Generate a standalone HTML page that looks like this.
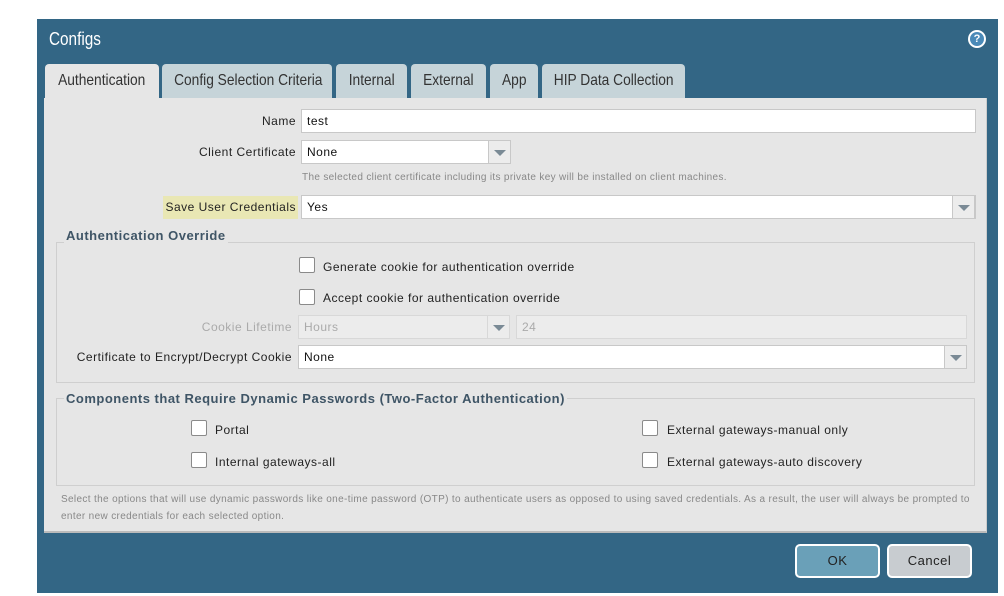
<!DOCTYPE html>
<html><head><meta charset="utf-8"><style>
*{box-sizing:border-box;margin:0;padding:0}
body{width:1004px;height:596px;background:#fff;position:relative;overflow:hidden;font-family:"Liberation Sans",sans-serif;font-size:12px;color:#222}
.a{position:absolute}
.dlg{left:37px;top:19px;width:961px;height:574px;background:#336685}
.title{left:49px;top:29px;color:#fff;font-size:18px;transform:scaleX(.85);transform-origin:left}
.help{left:968px;top:30px;width:18px;height:18px;border-radius:50%;background:#fff;}
.help div{position:absolute;left:2px;top:2px;width:14px;height:14px;border-radius:50%;background:#4a8ab8;color:#fff;font-size:11px;font-weight:bold;text-align:center;line-height:14px}
.tab{top:64px;height:34px;background:#c6d4d9;border-radius:4px 4px 0 0;font-size:16px;color:#333;text-align:center;line-height:34px;white-space:nowrap;overflow:hidden}
.tab span{display:inline-block;transform:scaleX(.86)}
.tab.on{background:#e6e6e6;height:36px}
.panel{left:44px;top:98px;width:943px;height:435px;background:#e6e6e6;border-right:1px solid #ccc;border-bottom:2px solid #bbb}
.lbl{text-align:right;font-size:12px;color:#222;letter-spacing:.5px;white-space:nowrap}
.in{background:#fff;border:1px solid #c8c8c8;height:24px;line-height:22px;padding-left:5px;font-size:12px;color:#111;letter-spacing:.5px}
.arr{background:#ececec;border:1px solid #c8c8c8;height:24px;width:23px}
.arr:after{content:"";position:absolute;left:5px;top:9px;border-left:6px solid transparent;border-right:6px solid transparent;border-top:6px solid #7a8a95}
.fs{border:1px solid #cfcfcf}
.lg{background:#e6e6e6;font-weight:bold;font-size:13px;color:#3f5566;padding:0 2px;letter-spacing:.5px;white-space:nowrap}
.cb{width:16px;height:16px;background:#fff;border:1px solid #8a8a8a;border-radius:2px}
.t{font-size:12px;color:#222;letter-spacing:.5px;white-space:nowrap}
.small{font-size:10px;color:#888;letter-spacing:.33px;white-space:nowrap}
.btn{top:544px;height:34px;border:2px solid #fff;border-radius:5px;text-align:center;line-height:30px;font-size:13px;color:#222;letter-spacing:.5px}
</style></head><body>
<div class="a dlg"></div>
<div class="a title">Configs</div>
<div class="a help"><div>?</div></div>
<div class="a panel"></div>
<div class="a tab on" style="left:45px;width:114px"><span>Authentication</span></div>
<div class="a tab" style="left:162px;width:170px"><span>Config Selection Criteria</span></div>
<div class="a tab" style="left:336px;width:71px"><span>Internal</span></div>
<div class="a tab" style="left:411px;width:75px"><span>External</span></div>
<div class="a tab" style="left:490px;width:48px"><span>App</span></div>
<div class="a tab" style="left:542px;width:143px"><span>HIP Data Collection</span></div>

<div class="a lbl" style="left:100px;width:196px;top:114px">Name</div>
<div class="a in" style="left:301px;top:109px;width:675px">test</div>

<div class="a lbl" style="left:100px;width:196px;top:145px">Client Certificate</div>
<div class="a in" style="left:301px;top:140px;width:188px">None</div>
<div class="a arr" style="left:488px;top:140px"></div>
<div class="a small" style="left:302px;top:172px">The selected client certificate including its private key will be installed on client machines.</div>

<div class="a" style="left:163px;top:196px;width:135px;height:23px;background:#e9e7b4"></div>
<div class="a lbl" style="left:100px;width:196px;top:200px">Save User Credentials</div>
<div class="a in" style="left:301px;top:195px;width:675px">Yes</div>
<div class="a arr" style="left:952px;top:195px"></div>

<div class="a fs" style="left:56px;top:242px;width:919px;height:141px"></div>
<div class="a lg" style="left:64px;top:228px">Authentication Override</div>
<div class="a cb" style="left:299px;top:257px"></div>
<div class="a t" style="left:323px;top:260px">Generate cookie for authentication override</div>
<div class="a cb" style="left:299px;top:289px"></div>
<div class="a t" style="left:323px;top:291px">Accept cookie for authentication override</div>
<div class="a lbl" style="left:100px;width:192px;top:320px;color:#aaa">Cookie Lifetime</div>
<div class="a in" style="left:298px;top:315px;width:190px;background:#ececec;border-color:#d8d8d8;color:#aaa">Hours</div>
<div class="a arr" style="left:487px;top:315px;border-color:#d8d8d8"></div>
<div class="a in" style="left:516px;top:315px;width:451px;background:#ececec;border-color:#d8d8d8;color:#aaa">24</div>
<div class="a lbl" style="left:40px;width:252px;top:350px">Certificate to Encrypt/Decrypt Cookie</div>
<div class="a in" style="left:298px;top:345px;width:669px">None</div>
<div class="a arr" style="left:944px;top:345px"></div>

<div class="a fs" style="left:56px;top:398px;width:919px;height:88px"></div>
<div class="a lg" style="left:64px;top:391px">Components that Require Dynamic Passwords (Two-Factor Authentication)</div>
<div class="a cb" style="left:191px;top:420px"></div>
<div class="a t" style="left:215px;top:423px">Portal</div>
<div class="a cb" style="left:191px;top:452px"></div>
<div class="a t" style="left:215px;top:455px">Internal gateways-all</div>
<div class="a cb" style="left:642px;top:420px"></div>
<div class="a t" style="left:667px;top:423px">External gateways-manual only</div>
<div class="a cb" style="left:642px;top:452px"></div>
<div class="a t" style="left:667px;top:455px">External gateways-auto discovery</div>

<div class="a small" style="left:61px;top:491px;line-height:17px;letter-spacing:.35px">Select the options that will use dynamic passwords like one-time password (OTP) to authenticate users as opposed to using saved credentials. As a result, the user will always be prompted to<br>enter new credentials for each selected option.</div>

<div class="a btn" style="left:795px;width:85px;background:#6aa0b8">OK</div>
<div class="a btn" style="left:887px;width:85px;background:#c8ccd0">Cancel</div>
</body></html>
